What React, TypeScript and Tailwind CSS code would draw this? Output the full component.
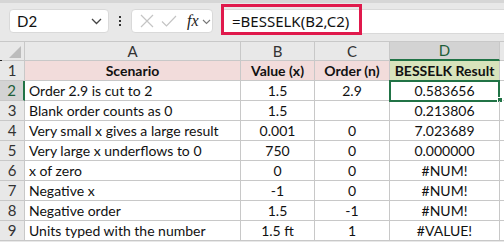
import React from "react";

const rows: { a: string; b: string; c: string; d: string }[] = [
  { a: "Order 2.9 is cut to 2", b: "1.5", c: "2.9", d: "0.583656" },
  { a: "Blank order counts as 0", b: "1.5", c: "", d: "0.213806" },
  { a: "Very small x gives a large result", b: "0.001", c: "0", d: "7.023689" },
  { a: "Very large x underflows to 0", b: "750", c: "0", d: "0.000000" },
  { a: "x of zero", b: "0", c: "0", d: "#NUM!" },
  { a: "Negative x", b: "-1", c: "0", d: "#NUM!" },
  { a: "Negative order", b: "1.5", c: "-1", d: "#NUM!" },
  { a: "Units typed with the number", b: "1.5 ft", c: "1", d: "#VALUE!" },
];

const cellFont = { fontFamily: "Lato, 'Liberation Sans', sans-serif" };

export default function App() {
  return (
    <div
      className="relative w-[504px] h-[242px] overflow-hidden bg-[#e8e8e8] text-[#111]"
      style={cellFont}
    >
      {/* top strip */}
      <div className="h-[3px] bg-[#d6d6d6]" />
      {/* formula bar */}
      <div className="flex h-[38px] items-start pt-[6px]">
        <div className="ml-[9px] flex h-[24px] w-[100px] items-center justify-between rounded-[4px] border border-[#d9d9d9] bg-white pl-[7px] pr-[6px]">
          <span className="text-[15px] leading-none">D2</span>
          <svg width="11" height="7" viewBox="0 0 11 7" className="mt-[1px]">
            <path d="M1 1l4.5 4.5L10 1" fill="none" stroke="#444" strokeWidth="1.3" />
          </svg>
        </div>
        <div className="flex h-[24px] w-[22px] flex-col items-center justify-center gap-[2px]">
          <span className="block h-[2px] w-[2px] bg-[#333]" />
          <span className="block h-[2px] w-[2px] bg-[#333]" />
          <span className="block h-[2px] w-[2px] bg-[#333]" />
        </div>
        <div className="flex h-[24px] w-[82px] items-center rounded-[4px] border border-[#d9d9d9] bg-white pl-[8px]">
          <svg width="14" height="14" viewBox="0 0 14 14">
            <path d="M1 1l12 12M13 1L1 13" stroke="#c4c4c4" strokeWidth="1.2" fill="none" />
          </svg>
          <svg width="16" height="12" viewBox="0 0 16 12" className="ml-[7px]">
            <path d="M1 6.5l4.5 4.5L15 1" stroke="#c4c4c4" strokeWidth="1.2" fill="none" />
          </svg>
          <span
            className="ml-[10px] text-[16px] italic leading-none text-[#222]"
            style={{ fontFamily: "'Liberation Serif', serif" }}
          >
            fx
          </span>
          <svg width="9" height="6" viewBox="0 0 9 6" className="ml-[3px] mt-[1px]">
            <path d="M1 1l3.5 3.5L8 1" fill="none" stroke="#777" strokeWidth="1.1" />
          </svg>
        </div>
        <div className="ml-[8px] flex h-[25px] flex-1 items-center rounded-l-[4px] border border-r-0 border-[#d9d9d9] bg-white pl-[10px]">
          <span
            className="text-[15px] leading-none"
            style={{ fontFamily: "'Noto Sans', sans-serif" }}
          >
            =BESSELK(B2,C2)
          </span>
        </div>
      </div>
      {/* red annotation */}
      <div className="absolute left-[221px] top-[4px] h-[31px] w-[141px] border-[3px] border-[#e0194c]" />

      {/* grid */}
      <div className="grid grid-cols-[25px_216px_74px_75px_110px_4px] border-t border-[#c8c8c8] bg-white text-[14px]">
        {/* column header row */}
        <div className="relative h-[19px] border-r border-b border-[#c8c8c8] bg-[#e8e8e8]">
          <svg width="12" height="12" viewBox="0 0 12 12" className="absolute right-[3px] bottom-[2px]">
            <path d="M12 0L12 12L0 12Z" fill="#bcbcbc" />
          </svg>
        </div>
        {["A", "B", "C"].map((c) => (
          <div
            key={c}
            className="flex h-[19px] items-center justify-center border-r border-b border-[#c8c8c8] bg-[#e8e8e8] text-[15px] leading-none text-[#333]"
          >
            {c}
          </div>
        ))}
        <div className="flex h-[19px] items-center justify-center border-r border-b-2 border-[#c8c8c8] border-b-[#217346] bg-[#d3d3d3] text-[15px] leading-none text-[#1e5e3a]">
          D
        </div>
        <div className="h-[19px] border-b border-[#c8c8c8] bg-[#e8e8e8]" />

        {/* row 1 */}
        <div className="relative flex h-[20px] items-center justify-center border-r border-b border-[#c8c8c8] bg-[#e8e8e8] text-[15px] text-[#333]">
          1
          <span className="absolute left-0 top-[-1px] h-[1px] w-[2px] bg-[#222]" />
        </div>
        <div className="flex h-[20px] items-center justify-center border-r border-b border-[#c8c8c8] bg-[#f2dcdb] font-bold">
          Scenario
        </div>
        <div className="flex h-[20px] items-center justify-center border-r border-b border-[#c8c8c8] bg-[#f2dcdb] font-bold">
          Value (x)
        </div>
        <div className="flex h-[20px] items-center justify-center border-r border-b border-[#c8c8c8] bg-[#f2dcdb] font-bold">
          Order (n)
        </div>
        <div className="flex h-[20px] items-center justify-center border-r border-b border-[#c8c8c8] bg-[#d8e4bc] font-bold">
          BESSELK Result
        </div>
        <div className="h-[20px] border-b border-[#c8c8c8]" />

        {rows.map((r, i) => {
          const n = i + 2;
          const sel = n === 2;
          return (
            <React.Fragment key={n}>
              <div
                className={
                  sel
                    ? "flex h-[20px] items-center justify-center border-r-2 border-b border-[#c8c8c8] border-r-[#217346] bg-[#d3d3d3] text-[15px] text-[#1e5e3a]"
                    : "flex h-[20px] items-center justify-center border-r border-b border-[#c8c8c8] bg-[#e8e8e8] text-[15px] text-[#333]"
                }
              >
                {n}
              </div>
              <div className="flex h-[20px] items-center overflow-hidden whitespace-nowrap border-r border-b border-[#c8c8c8] pl-[4px]">
                {r.a}
              </div>
              <div className="flex h-[20px] items-center justify-center border-r border-b border-[#c8c8c8]">
                {r.b}
              </div>
              <div className="flex h-[20px] items-center justify-center border-r border-b border-[#c8c8c8]">
                {r.c}
              </div>
              <div className="relative flex h-[20px] items-center justify-center border-r border-b border-[#c8c8c8]">
                {r.d}
                {sel && (
                  <>
                    <span className="absolute left-[-1px] top-[-1px] h-[22px] w-[111px] border-2 border-[#217346]" />
                    <span className="absolute right-[-4px] bottom-[-3px] h-[6px] w-[6px] border border-white bg-[#217346]" />
                  </>
                )}
              </div>
              <div className="h-[20px] border-b border-[#c8c8c8]" />
            </React.Fragment>
          );
        })}
      </div>
    </div>
  );
}
